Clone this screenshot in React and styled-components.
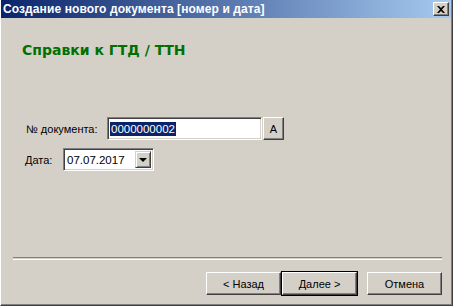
import React from 'react';
import styled, { createGlobalStyle } from 'styled-components';

const GlobalStyle = createGlobalStyle`
  html, body {
    margin: 0;
    padding: 0;
    background: #d4d0c8;
  }
  body {
    font-family: "Liberation Sans", Arial, sans-serif;
    font-size: 11px;
  }
`;

const Window = styled.div`
  width: 453px;
  height: 306px;
  box-sizing: border-box;
  display: flex;
  flex-direction: column;
  background: #d4d0c8;
  border-left: 1px solid #ffffff;
  border-right: 1px solid #404040;
  border-bottom: 1px solid #404040;
  box-shadow: inset -1px -1px 0 #808080;
`;

const TitleBar = styled.div`
  height: 18px;
  flex: none;
  display: flex;
  align-items: center;
  justify-content: space-between;
  padding: 0 2px 0 2px;
  margin-right: 1px;
  background: linear-gradient(to right, #0a246a, #a6caf0);
`;

const TitleText = styled.span`
  color: #ffffff;
  font-weight: bold;
  font-size: 12px;
  letter-spacing: 0.1px;
  white-space: nowrap;
`;

const CloseBtn = styled.div`
  width: 16px;
  height: 14px;
  box-sizing: border-box;
  background: #d4d0c8;
  border-top: 1px solid #ffffff;
  border-left: 1px solid #ffffff;
  border-right: 1px solid #404040;
  border-bottom: 1px solid #404040;
  box-shadow: inset -1px -1px 0 #808080;
  display: flex;
  align-items: center;
  justify-content: center;
`;

const Body = styled.div`
  flex: 1;
  display: flex;
  flex-direction: column;
  padding: 0 9px 10px 12px;
`;

const Heading = styled.h1`
  margin: 24px 0 0 9px;
  font-family: "DejaVu Sans", Verdana, sans-serif;
  font-size: 14px;
  line-height: 16px;
  font-weight: bold;
  color: #007000;
`;

const Form = styled.div`
  display: flex;
  flex-direction: column;
  gap: 8px;
  margin-top: 59px;
`;

const Row = styled.div`
  display: flex;
  align-items: center;
  padding-left: ${p => p.$indent}px;
`;

const Label = styled.span`
  width: ${p => p.$w}px;
  flex: none;
  font-size: 11px;
  color: #000;
`;

const Field = styled.div`
  width: ${p => p.$w}px;
  height: 23px;
  box-sizing: border-box;
  background: #ffffff;
  border-top: 1px solid #808080;
  border-left: 1px solid #808080;
  border-right: 1px solid #ffffff;
  border-bottom: 1px solid #ffffff;
  box-shadow: inset 1px 1px 0 #404040, inset -1px -1px 0 #d4d0c8;
  display: flex;
  align-items: center;
  padding: 2px 2px 2px 2px;
  font-size: 11.5px;
`;

const Selected = styled.span`
  background: #0a246a;
  color: #ffffff;
  padding: 0 1px;
  line-height: 14px;
`;

const DateText = styled.span`
  flex: 1;
  padding-left: 1px;
`;

const DropBtn = styled.div`
  width: 16px;
  height: 17px;
  box-sizing: border-box;
  background: #d4d0c8;
  border-top: 1px solid #d4d0c8;
  border-left: 1px solid #d4d0c8;
  border-right: 1px solid #404040;
  border-bottom: 1px solid #404040;
  box-shadow: inset 1px 1px 0 #ffffff, inset -1px -1px 0 #808080;
  display: flex;
  align-items: center;
  justify-content: center;
`;

const Arrow = styled.div`
  width: 0;
  height: 0;
  border-left: 4px solid transparent;
  border-right: 4px solid transparent;
  border-top: 4px solid #000;
  margin-top: 1px;
`;

const Button = styled.button`
  width: ${p => p.$w || 75}px;
  height: 23px;
  box-sizing: border-box;
  margin: 0;
  padding: 0;
  background: #d4d0c8;
  font-family: "Liberation Sans", Arial, sans-serif;
  font-size: 11px;
  color: #000;
  border-top: 1px solid #ffffff;
  border-left: 1px solid #ffffff;
  border-right: 1px solid #404040;
  border-bottom: 1px solid #404040;
  box-shadow: inset -1px -1px 0 #808080;
  outline: ${p => (p.$default ? '1px solid #000' : 'none')};
  outline-offset: 0;
  margin-left: ${p => p.$ml || 0}px;
`;

const Spacer = styled.div`
  flex: 1;
`;

const Separator = styled.div`
  height: 1px;
  border-top: 1px solid #808080;
  border-bottom: 1px solid #ffffff;
  margin-right: 1px;
`;

const Buttons = styled.div`
  display: flex;
  justify-content: flex-end;
  margin-top: 12px;
  padding-right: 1px;
`;

export default function App() {
  return (
    <>
      <GlobalStyle />
      <Window>
        <TitleBar>
          <TitleText>Создание нового документа [номер и дата]</TitleText>
          <CloseBtn>
            <svg width="8" height="7" viewBox="0 0 8 7">
              <path d="M0 0 L2 0 L4 2 L6 0 L8 0 L5 3.5 L8 7 L6 7 L4 5 L2 7 L0 7 L3 3.5 Z" fill="#000" />
            </svg>
          </CloseBtn>
        </TitleBar>
        <Body>
          <Heading>Справки к ГТД / ТТН</Heading>
          <Form>
            <Row $indent={13}>
              <Label $w={81}>№ документа:</Label>
              <Field $w={155}>
                <Selected>0000000002</Selected>
              </Field>
              <Button $w={21} $ml={1}>A</Button>
            </Row>
            <Row $indent={12}>
              <Label $w={38}>Дата:</Label>
              <Field $w={91}>
                <DateText>07.07.2017</DateText>
                <DropBtn><Arrow /></DropBtn>
              </Field>
            </Row>
          </Form>
          <Spacer />
          <Separator />
          <Buttons>
            <Button>&lt; Назад</Button>
            <Button $default $ml={1}>Далее &gt;</Button>
            <Button $ml={10}>Отмена</Button>
          </Buttons>
        </Body>
      </Window>
    </>
  );
}
